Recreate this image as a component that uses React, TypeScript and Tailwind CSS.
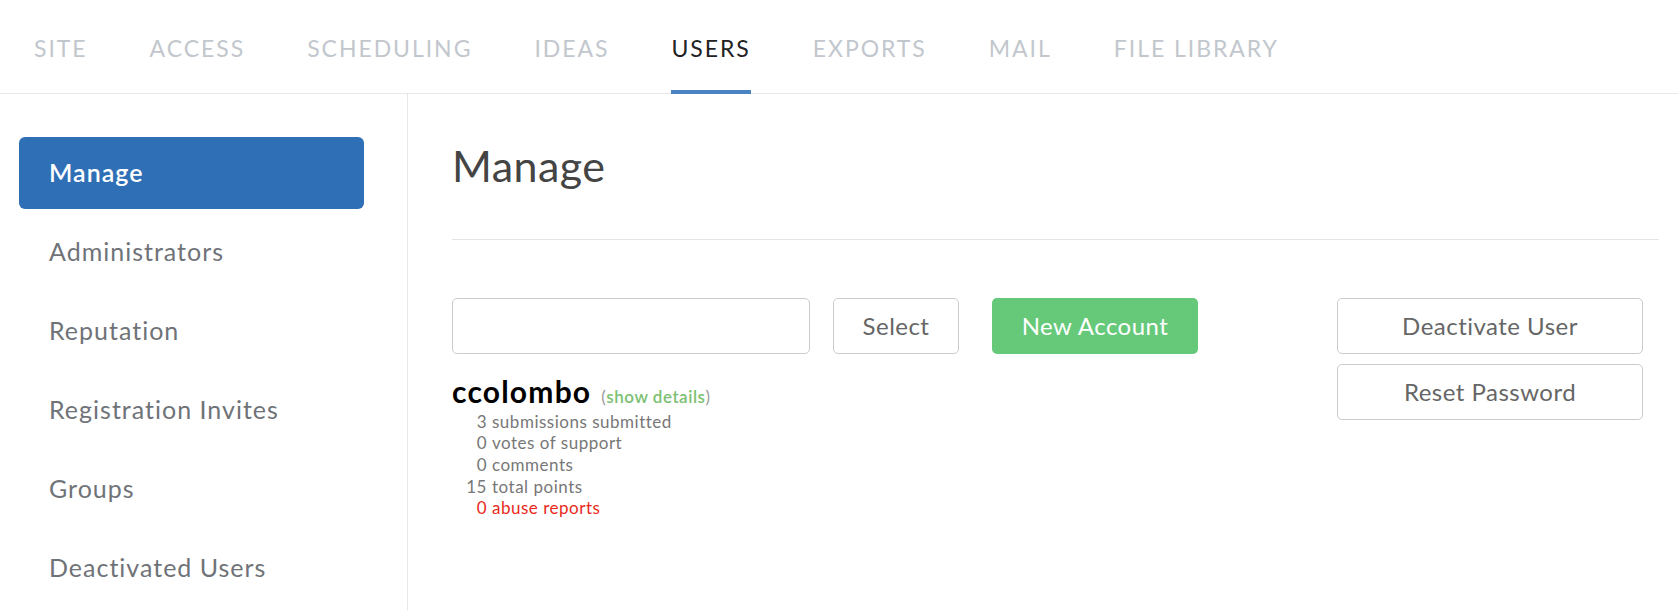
import React from 'react';

const tabs = ['SITE', 'ACCESS', 'SCHEDULING', 'IDEAS', 'USERS', 'EXPORTS', 'MAIL', 'FILE LIBRARY'];
const sideItems = ['Manage', 'Administrators', 'Reputation', 'Registration Invites', 'Groups', 'Deactivated Users'];

const stats: { n: string; label: string; red?: boolean }[] = [
  { n: '3', label: 'submissions submitted' },
  { n: '0', label: 'votes of support' },
  { n: '0', label: 'comments' },
  { n: '15', label: 'total points' },
  { n: '0', label: 'abuse reports', red: true },
];

export default function App() {
  return (
    <div className="w-[1678px] h-[610px] bg-white font-['Lato',sans-serif] overflow-hidden flex flex-col">
      {/* Top tabs */}
      <div className="h-[94px] shrink-0 border-b border-[#e6e8ea] flex items-end pl-[34px] gap-[62px]">
        {tabs.map((t) => (
          <div
            key={t}
            className={`h-full flex items-center text-[23px] tracking-[0.085em] border-b-4 -mb-px pt-[6px] ${
              t === 'USERS' ? 'text-[#222] border-[#4a84c4]' : 'text-[#c2c7cd] border-transparent'
            }`}
          >
            {t}
          </div>
        ))}
      </div>

      <div className="flex flex-1">
        {/* Sidebar */}
        <div className="w-[408px] shrink-0 border-r border-[#e6e8ea] pt-[43px] pl-[19px] pr-[43px] flex flex-col gap-[7px]">
          {sideItems.map((s, i) => (
            <div
              key={s}
              className={`h-[72px] flex items-center pl-[30px] rounded-[6px] text-[25px] tracking-[0.04em] ${
                i === 0 ? 'bg-[#2f6fb6] text-white font-semibold' : 'text-[#6f7378]'
              }`}
            >
              {s}
            </div>
          ))}
        </div>

        {/* Main */}
        <div className="flex-1 pl-[44px] pr-[19px] pt-[50px]">
          <h1 className="text-[43px] tracking-[0.01em] text-[#444] leading-none">Manage</h1>
          <div className="mt-[52px] border-t border-[#e3e5e7]" />

          <div className="mt-[58px] flex items-start">
            <div className="flex flex-col">
              <div className="flex items-center">
                <input className="w-[358px] h-[56px] border border-[#c9cbcd] rounded-[5px] outline-none px-3" />
                <button className="ml-[23px] w-[126px] h-[56px] border border-[#c9cbcd] rounded-[5px] text-[24px] tracking-[0.02em] text-[#666] bg-white">
                  Select
                </button>
                <button className="ml-[33px] w-[206px] h-[56px] rounded-[5px] text-[24px] tracking-[0.02em] text-white bg-[#66c97a]">
                  New Account
                </button>
              </div>

              <div className="mt-[22px]">
                <div className="flex items-baseline">
                  <span className="text-[30px] tracking-[0.04em] font-bold text-black leading-none">ccolombo</span>
                  <span className="ml-[10px] text-[17px] tracking-[0.03em] text-[#999]">
                    (<span className="text-[#7cbf72] font-semibold">show details</span>)
                  </span>
                </div>
                <div className="mt-[1px] grid grid-cols-[35px_auto] gap-x-[5px] text-[17px] tracking-[0.03em] leading-[21.7px] text-[#777]">
                  {stats.map((s) => (
                    <React.Fragment key={s.label}>
                      <span className={`text-right ${s.red ? 'text-[#e8291c]' : ''}`}>{s.n}</span>
                      <span className={s.red ? 'text-[#e8291c]' : ''}>{s.label}</span>
                    </React.Fragment>
                  ))}
                </div>
              </div>
            </div>

            <div className="ml-auto mr-[16px] flex flex-col gap-[10px]">
              <button className="w-[306px] h-[56px] border border-[#c9cbcd] rounded-[5px] text-[24px] tracking-[0.02em] text-[#666] bg-white">
                Deactivate User
              </button>
              <button className="w-[306px] h-[56px] border border-[#c9cbcd] rounded-[5px] text-[24px] tracking-[0.02em] text-[#666] bg-white">
                Reset Password
              </button>
            </div>
          </div>
        </div>
      </div>
    </div>
  );
}
